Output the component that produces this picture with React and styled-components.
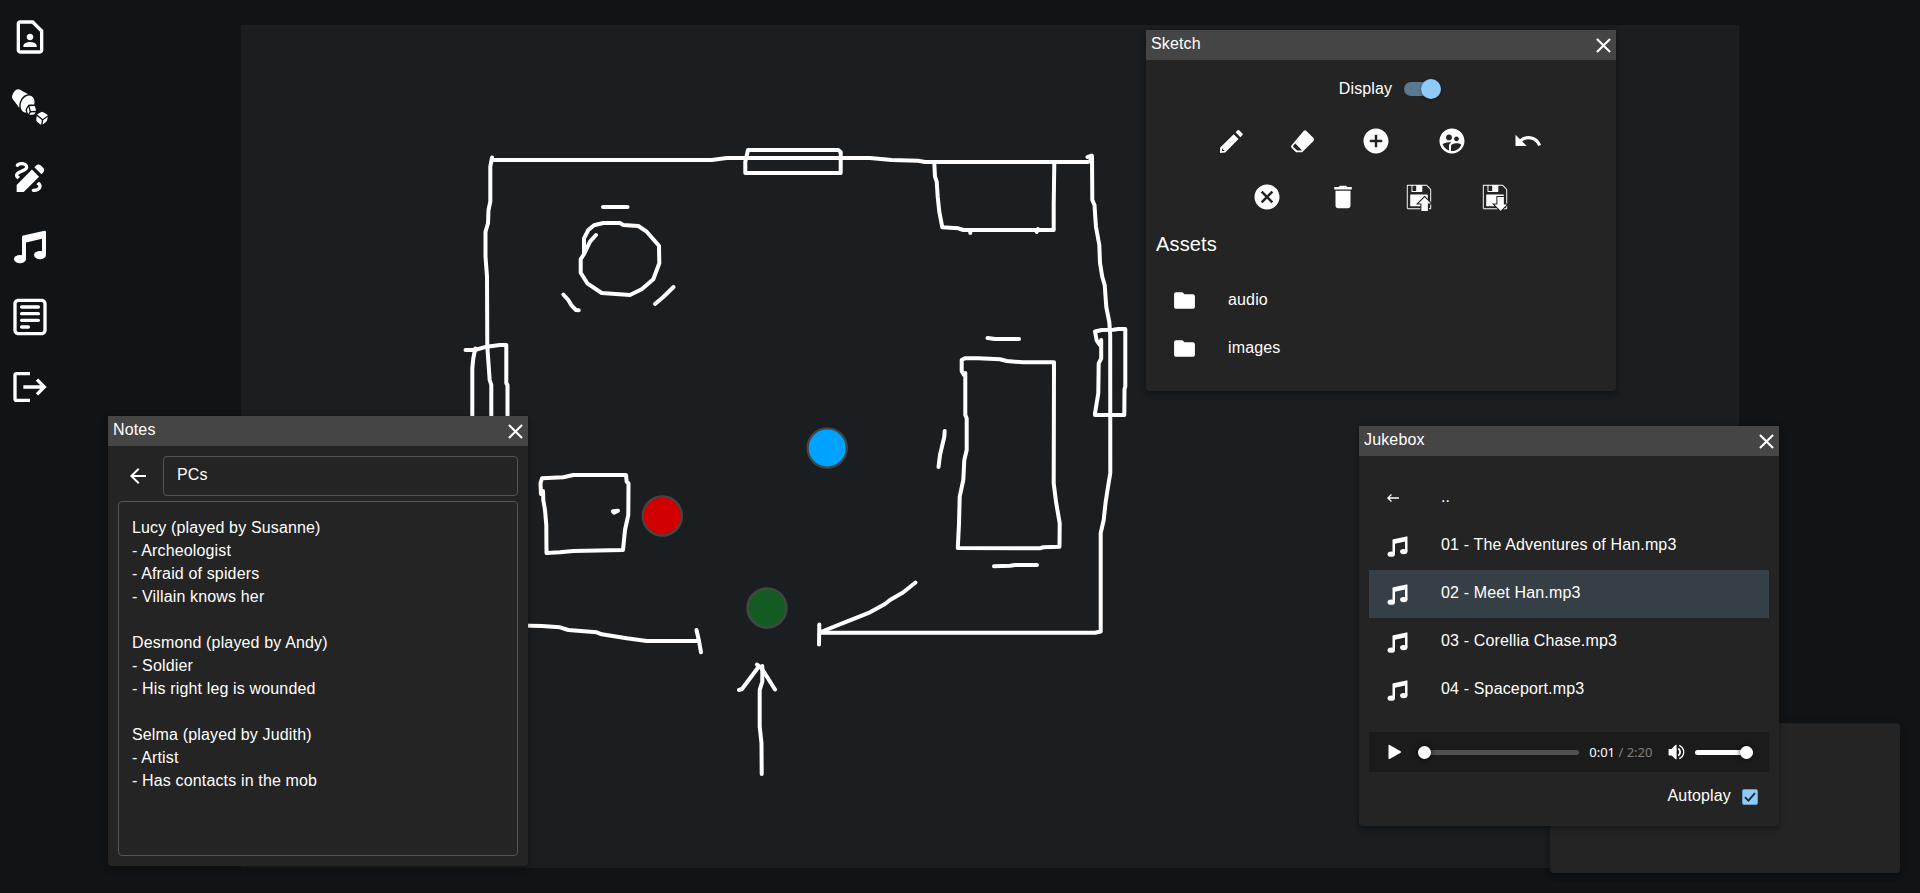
import React from "react";
import styled, { createGlobalStyle } from "styled-components";
import {
  MdAddCircle, MdArrowBack, MdCancel, MdClose, MdDelete, MdDraw, MdFolder,
  MdKeyboardBackspace, MdOutlineContactPage, MdSupervisedUserCircle, MdUndo,
} from "react-icons/md";
import { GiLoad, GiRollingDiceCup, GiSave } from "react-icons/gi";
import { CgNotes } from "react-icons/cg";

const GlobalStyle = createGlobalStyle`
  *, *::before, *::after { box-sizing: border-box; }
  body {
    margin: 0;
    overflow: hidden;
    background: #101416;
    color: #fff;
    font: 16px/24px "Liberation Sans", Helvetica, Arial, sans-serif;
    letter-spacing: 0.15px;
  }
  svg { display: block; flex: none; }
`;

/* ---------- icons ---------- */

const MusicIcon = ({ size = 40 }) => (
  <svg width={size} height={size} viewBox="0 0 40 40" fill="currentColor">
    <path d="M12 9.9Q12 8.6 13.3 8.4L34.5 3.8Q36 3.5 36 5V27.5H32V11.8L16 15.5V32H12Z" />
    <ellipse cx="10" cy="32.2" rx="6" ry="4.1" />
    <ellipse cx="30" cy="28.1" rx="6" ry="4.1" />
  </svg>
);

const LogoutIcon = ({ size = 40 }) => (
  <svg width={size} height={size} viewBox="0 0 24 24" fill="none" stroke="currentColor" strokeWidth="2">
    <path d="M12 4H4a1 1 0 0 0-1 1v14a1 1 0 0 0 1 1h8" />
    <path d="M8 12h12.5M16.2 7.6L20.6 12l-4.4 4.4" />
  </svg>
);

const PencilIcon = ({ size = 25 }) => (
  <svg width={size} height={size} viewBox="0 0 24 24" fill="currentColor" fillRule="evenodd">
    <path d="M15.9 3.2L17.9 1.2Q18.6.6 19.3 1.2L22.5 4.3Q23.2 5 22.6 5.8L20.5 7.9Z" />
    <path d="M14.1 5L18.7 9.6L6 22.5L1 23V17.9ZM2.9 18.9V21.1H5.1V20.2H3.8V18.9Z" />
  </svg>
);

const EraserIcon = ({ size = 25 }) => (
  <svg width={size} height={size} viewBox="0 0 25 25" fill="currentColor" fillRule="evenodd">
    <path d="M13.6 2Q15 .7 16.4 2L23.5 9.1Q24.9 10.5 23.5 11.9L12.6 22.7Q12.2 23.2 11.4 23.2H6.8Q6.1 23.2 5.5 22.7L1.6 18.8Q.4 17.5 1.6 16.2ZM5.3 14.4L3.2 16.8Q2.8 17.4 3.3 17.9L6.6 21Q7 21.4 7.6 21.4H12.1Z" />
  </svg>
);

const PlayIcon = () => (
  <svg width="14" height="16" viewBox="0 0 14 16" fill="currentColor">
    <path d="M.5 1.6Q.5.4 1.6 1L12.6 7.2Q13.6 8 12.6 8.7L1.6 14.9Q.5 15.4.5 14.3Z" />
  </svg>
);

const VolumeIcon = () => (
  <svg width="17" height="16" viewBox="0 0 17 16">
    <path d="M.6 5.6Q.6 5 1.2 5H3.6L7.4 1Q8.6.2 8.6 1.6V14.4Q8.6 15.8 7.4 15L3.6 11.4H1.2Q.6 11.4.6 10.8Z" fill="currentColor" />
    <path d="M10.3 4.4Q12.1 5.8 12.1 8.1T10.3 11.8" fill="none" stroke="currentColor" strokeWidth="1.9" />
    <path d="M11.3 1.3Q15.7 3.6 15.7 8T11.3 14.7" fill="none" stroke="currentColor" strokeWidth="1.3" />
  </svg>
);

const CheckIcon = () => (
  <svg width="14" height="14" viewBox="0 0 14 14" fill="none" stroke="#1c2730" strokeWidth="1.8">
    <path d="M1.9 7.1L5.4 10.6L12 3.2" />
  </svg>
);

/* ---------- page frame ---------- */

const Page = styled.div`
  position: relative;
  display: flex;
  width: 1920px;
  height: 893px;
  overflow: hidden;
`;

const Sidebar = styled.nav`
  display: flex;
  flex-direction: column;
  width: 60px;
  padding-top: 2px;
`;

const SidebarButton = styled.button`
  display: flex;
  align-items: center;
  justify-content: center;
  height: 70px;
  padding: 0;
  border: 0;
  background: none;
  color: inherit;
`;

const Stage = styled.main`
  flex: 1;
  display: flex;
  align-items: center;
  justify-content: center;
`;

const Board = styled.svg`
  width: 1498px;
  height: 843px;
  background: #1a1e20;
`;

/* ---------- floating windows ---------- */

const Window = styled.section`
  position: absolute;
  left: ${(p) => p.$x}px;
  top: ${(p) => p.$y}px;
  width: ${(p) => p.$w}px;
  height: ${(p) => p.$h}px;
  display: flex;
  flex-direction: column;
  border-radius: ${(p) => (p.$bare ? "4px" : "0 0 4px 4px")};
  background: #242424;
  box-shadow: 0 2px 4px -1px rgba(0, 0, 0, 0.2), 0 4px 5px rgba(0, 0, 0, 0.14), 0 1px 10px rgba(0, 0, 0, 0.12);
`;

const TitleBar = styled.header`
  display: flex;
  justify-content: space-between;
  flex: none;
  height: 30px;
  padding: 2px 0 0 5px;
  background: #454545;
`;

const CloseButton = styled.button`
  display: flex;
  align-items: center;
  height: 27px;
  padding: 0;
  border: 0;
  background: none;
  color: inherit;
`;

const WindowBody = styled.div`
  flex: 1;
  display: flex;
  flex-direction: column;
  padding: 0 10px;
`;

const Panel = ({ title, children, ...box }) => (
  <Window {...box}>
    <TitleBar>
      {title}
      <CloseButton aria-label={`Close ${title}`}><MdClose size={25} /></CloseButton>
    </TitleBar>
    <WindowBody>{children}</WindowBody>
  </Window>
);

/* ---------- lists ---------- */

const List = styled.ul`
  margin: 0;
  padding: ${(p) => p.$top}px 0 0;
  list-style: none;
`;

const ListRow = styled.li`
  display: flex;
  align-items: center;
  height: 48px;
  padding: 0 16px;
  background: ${(p) => (p.$selected ? "#363f45" : "none")};
`;

const RowIcon = styled.span`
  width: 56px;
  padding-bottom: ${(p) => p.$lift || 0}px;
`;

const RowText = styled.span`
  padding-bottom: 3px;
`;

/* ---------- sketch window ---------- */

const SwitchRow = styled.label`
  display: flex;
  align-items: center;
  justify-content: center;
  height: 53px;
  gap: 12px;
  padding: 5px 0 0 15px;
`;

const SwitchLabel = styled.span`
  padding-bottom: 1px;
`;

const SwitchTrack = styled.span`
  display: flex;
  align-items: center;
  justify-content: flex-end;
  width: 34px;
  height: 14px;
  border-radius: 7px;
  background: #5a7890;
`;

const SwitchThumb = styled.span`
  flex: none;
  width: 20px;
  height: 20px;
  margin-right: -3px;
  border-radius: 50%;
  background: #90caf9;
  box-shadow: 0 1px 3px rgba(0, 0, 0, 0.4);
`;

const ToolRow = styled.div`
  display: flex;
  justify-content: center;
`;

const ToolButton = styled.button`
  display: flex;
  align-items: center;
  justify-content: center;
  width: ${(p) => p.$w || 76}px;
  height: 56px;
  padding: 0;
  border: 0;
  background: none;
  color: inherit;
`;

const Heading = styled.h2`
  margin: 3px 0 0;
  font-size: 20px;
  font-weight: 400;
  line-height: 32px;
`;

/* ---------- notes window ---------- */

const NoteHeader = styled.div`
  display: flex;
  align-items: center;
  margin-top: 10px;
`;

const BackButton = styled.button`
  width: 45px;
  padding: 0 0 0 8px;
  border: 0;
  background: none;
  color: inherit;
`;

const fieldFrame = `
  border: 1px solid #555;
  border-radius: 4px;
`;

const TitleField = styled.div`
  flex: 1;
  height: 40px;
  padding: 6px 13px;
  ${fieldFrame}
`;

const NoteText = styled.div`
  height: 355px;
  margin-top: 5px;
  padding: 14px 13px;
  ${fieldFrame}
  line-height: 23px;
  white-space: pre-line;
`;

/* ---------- jukebox window ---------- */

const Player = styled.div`
  display: flex;
  align-items: center;
  height: 40px;
  margin-top: 18px;
  padding: 0 16px 0 18.5px;
  background: #1b1b1b;
`;

const SeekBar = styled.div`
  display: flex;
  align-items: center;
  width: 162px;
  height: 5px;
  margin-left: 16px;
  border-radius: 3px;
  background: linear-gradient(90deg, #00b6f0 5px, #505050 5px);
`;

const Knob = styled.span`
  width: 13px;
  height: 13px;
  border-radius: 50%;
  background: #fff;
  box-shadow: 0 0 5px rgba(0, 0, 0, 0.8);
`;

const Time = styled.span`
  width: 89px;
  padding-left: 10px;
  font: 13px/18px "Noto Sans", "Open Sans", sans-serif;
  letter-spacing: 0;
  white-space: nowrap;
`;

const Duration = styled.span`
  color: #808080;
`;

const VolumeBar = styled.div`
  display: flex;
  align-items: center;
  justify-content: flex-end;
  width: 58px;
  height: 5px;
  margin-left: 10px;
  border-radius: 3px;
  background: #fff;
`;

const AutoplayRow = styled.label`
  display: flex;
  align-items: center;
  justify-content: flex-end;
  gap: 11px;
  height: 50px;
  padding-right: 11px;
`;

const AutoplayLabel = styled.span`
  padding-bottom: 2px;
`;

const Checkbox = styled.span`
  display: flex;
  align-items: center;
  justify-content: center;
  width: 16px;
  height: 16px;
  border: 1px solid #6c9cc4;
  border-radius: 2px;
  background: #90caf9;
`;

/* ---------- content ---------- */

const navigation = [
  ["Characters", <MdOutlineContactPage size={40} />],
  ["Dice", <GiRollingDiceCup size={40} />],
  ["Sketch", <MdDraw size={40} />],
  ["Jukebox", <MusicIcon />],
  ["Notes", <CgNotes size={40} />],
  ["Log out", <LogoutIcon />],
];

const drawTools = [
  ["Draw", <PencilIcon />, 71],
  ["Erase", <EraserIcon />, 71],
  ["Add", <MdAddCircle size={30} />],
  ["Tokens", <MdSupervisedUserCircle size={30} />],
  ["Undo", <MdUndo size={30} />],
];

const fileTools = [
  ["Clear", <MdCancel size={30} />],
  ["Delete", <MdDelete size={30} />],
  ["Save", <GiSave size={30} />],
  ["Load", <GiLoad size={30} />],
];

const tracks = [
  "01 - The Adventures of Han.mp3",
  "02 - Meet Han.mp3",
  "03 - Corellia Chase.mp3",
  "04 - Spaceport.mp3",
];

const note = `Lucy (played by Susanne)
- Archeologist
- Afraid of spiders
- Villain knows her

Desmond (played by Andy)
- Soldier
- His right leg is wounded

Selma (played by Judith)
- Artist
- Has contacts in the mob`;

const strokes = [
  // walls
  "492,160 711.7,160 726.7,158 870,158 891.7,160 918,160.7 925,162 1088,162 1091.5,160 1091.5,155.5 1087.5,157",
  "1092,156 1092.3,200 1094.5,205 1095,213 1096,227 1099.3,245 1100,263 1102.3,277 1104.7,285 1106.3,307 1109.3,322 1110.2,335 1110.3,473 1108.3,485 1105.7,501.7 1103.7,520 1100.7,533 1100.7,631.5 1095,632.8 820.5,632.8",
  "492,157.5 490.3,166.7 490.3,201.7 488.5,210 488,223.3 485.5,231.7 485.5,256.7 487,276.7 487.3,346.7 489.7,380 491.3,385 491.3,420",
  "520,625.5 541.7,626 560,627.3 568.3,630 596.7,632.3 601.7,634.3 626.7,638.3 646.7,641 699,641",
  // windows
  "465.5,350 475,350 486.7,346.7 500,345 506.3,345 506.3,383.3 507.5,385 507.5,420",
  "475.3,348.5 473.3,358.3 472.3,368.3 472.3,420",
  "748,150 838.3,150 840.7,152 840.7,173 745.3,173 745.3,161.7 748,150",
  "1101.2,340 1101.2,358.3 1098.7,363.3 1098.3,393.3 1096.7,403 1095,413.5 1095,415 1124.3,415 1124.5,389 1125.3,386.7 1125.3,329 1118.3,329 1113.3,329.8 1101.7,330 1095,331.5 1096.7,340.5 1100,345",
  // round table and stools
  "596,235 590,241.7 584,254 584,238.3 588.3,230 594,225.3 603.3,223 620,223 623.3,225 638.3,226 646.7,231.7 659,245.7 659.3,263.3 653.3,279.3 641.7,289.3 630,295 601.7,293 587.3,283.3 580.7,272.7 580.7,259.3 584,254",
  "603,207 627.5,207",
  "563.3,294.5 568.3,300 571.7,305.7 576,310 578.8,310.3",
  "655,304 663.3,297 673.5,287",
  // counter
  "934.3,163 935,176.7 936.7,181.7 937.7,196.7 939.3,211.7 942.3,227.3 958.3,228.3 963.3,230 1053.7,230 1053.7,205 1054.3,163",
  "970.3,230 970.3,233",
  "1038,229 1036.7,232",
  // long table and benches
  "964,375 961.7,371 961.7,360 965,358.3 978.3,358.3 1000,359.3 1006.7,361 1023.3,362.3 1054,362.3 1053.7,483.3 1056,501.7 1059.7,523.3 1059.5,546.7 1043.3,547.3 1040,548.2 957.8,548 959,523.3 959.7,496.7 963.3,480 964.3,460 966.7,450 966.7,418.3 965.3,415 965.3,373",
  "987.5,338 995,339 1019,339",
  "944.7,431 944.3,436.7 940,455 938.5,467",
  "994,566.2 1010,565.8 1015,565 1037,565",
  // crate
  "541,494 540.5,483.3 542,478.3 563.3,477.3 573.3,475 626,475 626.7,481.7 628.5,483.3 628.3,515 625,530 623,550 573.3,550.9 560,552.3 546.5,553 546.3,525 545,510 543.3,500 543,491",
  "612.8,511.3 618,510.8 614,512.8 612.8,511.3",
  // doorway
  "819.3,624.5 819,644.5",
  "820.7,632 846.7,621.7 870,612.3 885,604 890,600 903,592.5 915.5,582.5",
  "696.5,630 699,641 701,652.3",
  // arrow
  "761.7,774 761.5,743.3 759.7,726.7 759.7,690 762.3,681.7 762.3,666",
  "739,690 742,689 758.5,667 757,664.5 761.5,668 775,689.5",
];

const tokens = [
  [827.2, 448, "#00a2ff"],
  [662.3, 516, "#d10000"],
  [767, 608, "#155b24"],
];

const ToolStrip = ({ tools }) => (
  <ToolRow>
    {tools.map(([label, icon, w]) => (
      <ToolButton key={label} $w={w} aria-label={label}>{icon}</ToolButton>
    ))}
  </ToolRow>
);

export default function App() {
  return (
    <>
      <GlobalStyle />
      <Page>
        <Sidebar>
          {navigation.map(([label, icon]) => (
            <SidebarButton key={label} aria-label={label}>{icon}</SidebarButton>
          ))}
        </Sidebar>

        <Stage>
          <Board viewBox="241 25 1498 843">
            <g fill="none" stroke="#fff" strokeWidth="4" strokeLinecap="round" strokeLinejoin="round">
              {strokes.map((points) => <polyline key={points} points={points} />)}
            </g>
            {tokens.map(([x, y, color]) => (
              <circle key={color} cx={x} cy={y} r="19.6" fill={color} stroke="#454545" strokeWidth="2.2" />
            ))}
          </Board>
        </Stage>

        <Window $x={1550} $y={723} $w={350} $h={150} $bare />

        <Panel title="Sketch" $x={1146} $y={30} $w={470} $h={361}>
          <SwitchRow>
            <SwitchLabel>Display</SwitchLabel>
            <SwitchTrack><SwitchThumb /></SwitchTrack>
          </SwitchRow>
          <ToolStrip tools={drawTools} />
          <ToolStrip tools={fileTools} />
          <Heading>Assets</Heading>
          <List $top={17}>
            {["audio", "images"].map((name) => (
              <ListRow key={name}>
                <RowIcon $lift={1}><MdFolder size={25} /></RowIcon>
                <RowText>{name}</RowText>
              </ListRow>
            ))}
          </List>
        </Panel>

        <Panel title="Notes" $x={108} $y={416} $w={420} $h={450}>
          <NoteHeader>
            <BackButton aria-label="Back"><MdArrowBack size={24} /></BackButton>
            <TitleField>PCs</TitleField>
          </NoteHeader>
          <NoteText>{note}</NoteText>
        </Panel>

        <Panel title="Jukebox" $x={1359} $y={426} $w={420} $h={400}>
          <List $top={18}>
            <ListRow>
              <RowIcon><MdKeyboardBackspace size={16} /></RowIcon>
              <RowText>..</RowText>
            </ListRow>
            {tracks.map((name, i) => (
              <ListRow key={name} $selected={i === 1}>
                <RowIcon><MusicIcon size={25} /></RowIcon>
                <RowText>{name}</RowText>
              </ListRow>
            ))}
          </List>
          <Player>
            <PlayIcon />
            <SeekBar><Knob /></SeekBar>
            <Time>0:01 <Duration>/ 2:20</Duration></Time>
            <VolumeIcon />
            <VolumeBar><Knob /></VolumeBar>
          </Player>
          <AutoplayRow>
            <AutoplayLabel>Autoplay</AutoplayLabel>
            <Checkbox><CheckIcon /></Checkbox>
          </AutoplayRow>
        </Panel>
      </Page>
    </>
  );
}
